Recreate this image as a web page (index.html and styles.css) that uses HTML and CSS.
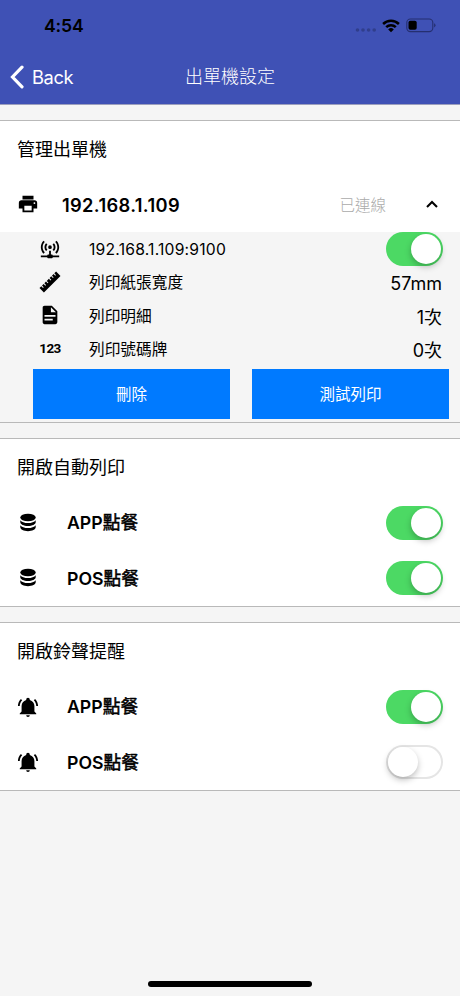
FILE: index.html
```html
<!DOCTYPE html>
<html lang="zh-Hant">
<head>
<meta charset="utf-8">
<title>出單機設定</title>
<link rel="stylesheet" href="styles.css">
</head>
<body>
<svg class="defs" width="0" height="0" aria-hidden="true">
  <symbol id="database" viewBox="0 0 24 24">
    <ellipse cx="12" cy="6" rx="8.4" ry="4.1"/>
    <path d="M3.6 9C5 11 8.2 12.1 12 12.1S19 11 20.4 9V11.3C20.4 13.5 16.6 15.4 12 15.4S3.6 13.5 3.6 11.3Z"/>
    <path d="M3.6 14.4C5 16.4 8.2 17.5 12 17.5S19 16.4 20.4 14.4V16.7C20.4 19 16.6 20.9 12 20.9S3.6 19 3.6 16.7Z"/>
  </symbol>
  <symbol id="bell" viewBox="0 0 24 24">
    <path d="M21,19V20H3V19L5,17V11C5,7.9 7.03,5.17 10,4.29C10,4.19 10,4.1 10,4A2,2 0 0,1 12,2A2,2 0 0,1 14,4C14,4.1 14,4.19 14,4.29C16.97,5.17 19,7.9 19,11V17L21,19M14,21A2,2 0 0,1 12,23A2,2 0 0,1 10,21M19.75,3.19L18.33,4.61C20.04,6.3 21,8.6 21,11H23C23,8.07 21.84,5.25 19.75,3.19M1,11H3C3,8.6 3.96,6.3 5.67,4.61L4.25,3.19C2.16,5.25 1,8.07 1,11Z"/>
  </symbol>
</svg>
<div class="screen">
  <header class="header">
    <div class="status">
      <span class="time">4:54</span>
      <div class="signals">
        <svg class="dots" width="22" height="4" viewBox="0 0 22 4"><circle cx="2.5" cy="2" r="1.8"/><circle cx="8" cy="2" r="1.8"/><circle cx="13.6" cy="2" r="1.8"/><circle cx="19.2" cy="2" r="1.8"/></svg>
        <svg class="wifi" width="18" height="14" viewBox="0 0 18 14"><path d="M1.1 5A11.3 11.3 0 0 1 16.9 5M4.2 8.2A7 7 0 0 1 13.8 8.2" fill="none" stroke="#000" stroke-width="2.5"/><path d="M9 13.2L6.2 10.4A4 4 0 0 1 11.8 10.4Z"/></svg>
        <svg class="battery" width="30" height="15" viewBox="0 0 30 15"><rect x=".8" y="1" width="26" height="12.6" rx="3.6" fill="none" stroke="#252f70" stroke-width="1.1"/><rect x="2.5" y="2.8" width="8.2" height="9" rx="1.8"/><path d="M28.1 5.2Q29.5 5.8 29.5 7.3T28.1 9.4Z" fill="#252f70"/></svg>
      </div>
    </div>
    <nav class="nav">
      <div class="back">
        <svg width="14" height="24" viewBox="0 0 14 24"><path d="M12 2.2L2.5 12L12 21.8" fill="none" stroke="#fff" stroke-width="3.2" stroke-linecap="round" stroke-linejoin="miter"/></svg>
        <span>Back</span>
      </div>
      <h1 class="title">出單機設定</h1>
      <div></div>
    </nav>
  </header>

  <main class="content">
    <section class="card">
      <h2 class="card-title">管理出單機</h2>
      <div class="row printer-row">
        <svg class="icon" viewBox="0 0 24 24"><path d="M18,3H6V7H18M19,12A1,1 0 0,1 18,11A1,1 0 0,1 19,10A1,1 0 0,1 20,11A1,1 0 0,1 19,12M16,19H8V14H16M19,8H5A3,3 0 0,0 2,11V17H6V21H18V17H22V11A3,3 0 0,0 19,8Z"/></svg>
        <span class="printer">192.168.1.109</span>
        <span class="state">已連線</span>
        <svg class="chevron" width="12" height="8" viewBox="0 0 12 8"><path d="M1 7L6 2L11 7" fill="none" stroke="#000" stroke-width="2.1"/></svg>
      </div>
      <div class="details">
        <div class="detail">
          <svg class="icon" viewBox="0 0 24 24"><path d="M4.93,2.93C3.12,4.74 2,7.24 2,10C2,12.76 3.12,15.26 4.93,17.07L6.34,15.66C4.89,14.22 4,12.22 4,10C4,7.79 4.89,5.78 6.34,4.34L4.93,2.93M19.07,2.93L17.66,4.34C19.11,5.78 20,7.79 20,10C20,12.22 19.11,14.22 17.66,15.66L19.07,17.07C20.88,15.26 22,12.76 22,10C22,7.24 20.88,4.74 19.07,2.93M7.76,5.76C6.67,6.85 6,8.35 6,10C6,11.65 6.67,13.15 7.76,14.24L9.17,12.83C8.45,12.11 8,11.11 8,10C8,8.89 8.45,7.89 9.17,7.17L7.76,5.76M16.24,5.76L14.83,7.17C15.55,7.89 16,8.89 16,10C16,11.11 15.55,12.11 14.83,12.83L16.24,14.24C17.33,13.15 18,11.65 18,10C18,8.35 17.33,6.85 16.24,5.76M12,8A2,2 0 0,0 10,10A2,2 0 0,0 12,12A2,2 0 0,0 14,10A2,2 0 0,0 12,8M11,14V18H10A1,1 0 0,0 9,19H2V21H9A1,1 0 0,0 10,22H14A1,1 0 0,0 15,21H22V19H15A1,1 0 0,0 14,18H13V14H11Z"/></svg>
          <span class="label address">192.168.1.109:9100</span>
          <span class="toggle on"></span>
        </div>
        <div class="detail">
          <svg class="icon" viewBox="0 0 24 24"><g transform="rotate(-45 12 12)"><path d="M-.8 8.6H2V11.2H3.1V8.6H5.6V11.2H6.7V8.6H9.2V11.2H10.3V8.6H13.7V11.2H14.8V8.6H17.3V11.2H18.4V8.6H20.9V11.2H22V8.6H24.8V15.4H-.8Z"/></g></svg>
          <span class="label">列印紙張寬度</span>
          <span class="value">57mm</span>
        </div>
        <div class="detail">
          <svg class="icon" viewBox="0 0 24 24"><path d="M13,9H18.5L13,3.5V9M6,2H14L20,8V20A2,2 0 0,1 18,22H6C4.89,22 4,21.1 4,20V4C4,2.89 4.89,2 6,2M15,18V16H6V18H15M18,14V12H6V14H18Z"/></svg>
          <span class="label">列印明細</span>
          <span class="value">1次</span>
        </div>
        <div class="detail">
          <span class="icon numeric">123</span>
          <span class="label">列印號碼牌</span>
          <span class="value">0次</span>
        </div>
        <div class="actions">
          <button class="button">刪除</button>
          <button class="button">測試列印</button>
        </div>
      </div>
    </section>

    <section class="card">
      <h2 class="card-title">開啟自動列印</h2>
      <div class="row">
        <svg class="icon"><use href="#database"/></svg>
        <span class="name">APP<span class="cjk">點餐</span></span>
        <span class="toggle on"></span>
      </div>
      <div class="row">
        <svg class="icon"><use href="#database"/></svg>
        <span class="name">POS<span class="cjk">點餐</span></span>
        <span class="toggle on"></span>
      </div>
    </section>

    <section class="card">
      <h2 class="card-title">開啟鈴聲提醒</h2>
      <div class="row">
        <svg class="icon"><use href="#bell"/></svg>
        <span class="name">APP<span class="cjk">點餐</span></span>
        <span class="toggle on"></span>
      </div>
      <div class="row">
        <svg class="icon"><use href="#bell"/></svg>
        <span class="name">POS<span class="cjk">點餐</span></span>
        <span class="toggle"></span>
      </div>
    </section>
  </main>
  <footer class="home"><div class="home-bar"></div></footer>
</div>
</body>
</html>
```
FILE: styles.css
```css
* { box-sizing: border-box; }
body {
  margin: 0;
  font-family: Inter, "Noto Sans CJK TC", sans-serif;
  color: #000;
  background: #f5f5f5;
}
.defs { display: block; }
.screen {
  width: 460px;
  height: 996px;
  display: flex;
  flex-direction: column;
  overflow: hidden;
}
.header {
  height: 105px;
  flex: none;
  background: #3f51b5;
  border-bottom: 1px solid #9c9fbd;
}
.status {
  height: 51px;
  display: flex;
  align-items: center;
  justify-content: space-between;
  padding: 0 24px 0 44px;
}
.time { font-size: 17.7px; font-weight: 600; letter-spacing: -0.2px; }
.signals { display: flex; align-items: center; }
.dots { fill: #303e8c; margin: 9px 5px 0 0; }
.wifi { margin-right: 6px; }
.nav {
  height: 51px;
  display: grid;
  grid-template-columns: 1fr auto 1fr;
  align-items: center;
  padding: 0 10px;
}
.back {
  display: flex;
  align-items: center;
  gap: 8px;
  color: #fff;
  font-size: 18.3px;
  letter-spacing: -0.4px;
}
.title {
  margin: 1px 0 0;
  color: #fff;
  font-size: 18px;
  font-weight: 300;
  line-height: 24px;
}
.content {
  flex: 1;
  display: flex;
  flex-direction: column;
  gap: 15px;
  padding-top: 15px;
}
.card {
  background: #fff;
  border-top: 1.5px solid #b9b9b9;
  border-bottom: 1.5px solid #b9b9b9;
}
.card-title {
  margin: 0;
  height: 56px;
  padding: 1px 0 0 17px;
  font-size: 18px;
  font-weight: 400;
  line-height: 56px;
}
.row {
  height: 55.5px;
  display: flex;
  align-items: center;
  padding: 1px 17px 0;
}
.printer-row { height: 55px; padding: 0 17px 1px; }
.icon { width: 22px; height: 22px; flex: none; }
.printer { margin: 1px 0 0 23px; font-size: 18.3px; font-weight: 600; letter-spacing: 0.35px; }
.state { margin: 0 0 1px auto; font-size: 15.5px; color: #aaa; font-weight: 300; }
.chevron { margin: 0 5px 0 40px; }
.name { margin: 1px 0 0 28px; font-size: 17.7px; font-weight: 600; line-height: 26px; }
.cjk { font-weight: 400; -webkit-text-stroke: 0.5px #000; }
.toggle {
  width: 57px;
  height: 34px;
  margin-left: auto;
  flex: none;
  display: flex;
  border-radius: 17px;
  padding: 2px;
  box-shadow: inset 0 0 0 2px #e5e5e5;
}
.toggle::after {
  content: "";
  width: 30px;
  height: 30px;
  border-radius: 50%;
  background: #fff;
  box-shadow: 0 3px 6px rgba(0, 0, 0, 0.25);
}
.toggle.on {
  background: #4cd964;
  box-shadow: none;
  justify-content: flex-end;
}
.details { background: #f5f5f5; height: 189.5px; }
.detail {
  height: 33.25px;
  display: flex;
  align-items: center;
  padding: 0 17px 0 39px;
}
.label { margin: 0 0 0 28px; font-size: 15.7px; }
.address { margin-top: 1px; letter-spacing: 0.2px; }
.value { margin: 5px 1px 0 auto; font-size: 18px; line-height: 26px; }
.numeric {
  font: 700 13.5px/22px Roboto, sans-serif;
  letter-spacing: -0.6px;
  text-align: center;
}
.actions {
  display: grid;
  grid-template-columns: 1fr 1fr;
  gap: 22px;
  margin: 4px 11px 0 33px;
}
.button {
  height: 50px;
  border: 0;
  padding: 0 0 3px;
  background: #007aff;
  color: #fff;
  font: inherit;
  font-size: 15.5px;
  font-weight: 400;
}
.home {
  height: 15px;
  flex: none;
  display: flex;
  justify-content: center;
}
.home-bar {
  width: 164px;
  height: 6px;
  border-radius: 3px;
  background: #000;
}
```
